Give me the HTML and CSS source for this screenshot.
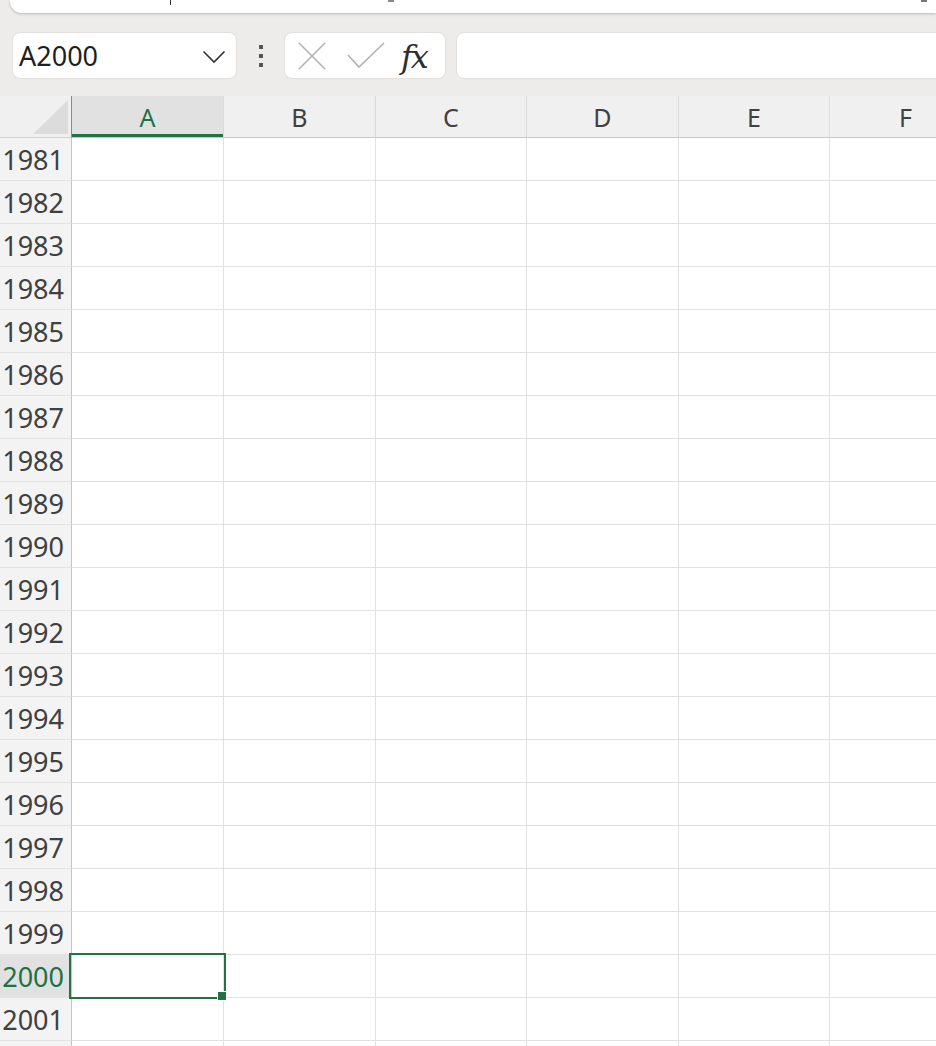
FILE: index.html
```html
<!DOCTYPE html>
<html lang="en">
<head>
  <meta charset="UTF-8" />
  <title>Sheet</title>
  <link rel="stylesheet" href="styles.css">
</head>
<body>
  <div class="titlebar">
    <span class="frag frag1"></span>
    <span class="frag frag2"></span>
    <span class="frag frag3"></span>
  </div>

  <div class="formula-row">
    <div class="namebox">
      <span class="cell-ref">A2000</span>
      <svg class="chevron" width="24" height="14" viewBox="0 0 24 14">
        <polyline points="1.5,1.5 12,12 22.5,1.5" fill="none" stroke="#333" stroke-width="1.6" />
      </svg>
    </div>
    <div class="grip"><i></i><i></i><i></i></div>
    <div class="fx-buttons">
      <svg width="30" height="30" viewBox="0 0 30 30" class="btn-cancel">
        <path d="M2 2 L28 28 M28 2 L2 28" stroke="#b3b3b3" stroke-width="1.6" fill="none" />
      </svg>
      <svg width="38" height="28" viewBox="0 0 38 28" class="btn-enter">
        <polyline points="1,13 12,25 37,1" stroke="#b3b3b3" stroke-width="1.6" fill="none" />
      </svg>
      <span class="fx">fx</span>
    </div>
    <div class="formula-input"></div>
  </div>

  <div class="sheet">
    <div class="corner"><span class="corner-tri"></span></div>
    <div class="col-head selected">A</div>
    <div class="col-head">B</div>
    <div class="col-head">C</div>
    <div class="col-head">D</div>
    <div class="col-head">E</div>
    <div class="col-head">F</div>
  </div>

<script>
  // build rows 1981 - 2001, plus one empty strip that the window cuts
  const sheet = document.querySelector('.sheet')
  for (let r = 1981; r <= 2002; r++) {
    const head = document.createElement('div')
    head.className = 'row-head' + (r === 2000 ? ' selected' : '')
    if (r < 2002) head.textContent = r
    sheet.appendChild(head)
    for (let c = 0; c < 6; c++) {
      const cell = document.createElement('div')
      cell.className = 'cell' + (r === 2000 && c === 0 ? ' active' : '')
      sheet.appendChild(cell)
    }
  }
</script>
</body>
</html>
```

FILE: styles.css
```css
html, body {
  margin: 0;
  height: 100%;
  overflow: hidden;
}
body {
  background: #eeecea;
  font-family: "Noto Sans", "Open Sans", sans-serif;
  color: #262626;
}
.titlebar {
  position: relative;
  height: 13px;
  margin-left: 10px;
  background: #fff;
  border-bottom-left-radius: 12px;
  box-shadow: 0 1px 3px rgba(0, 0, 0, 0.22);
}
.frag {
  position: absolute;
  top: 0;
  background: #333;
}
.frag1 { left: 160px; width: 1px; height: 5px; }
.frag2 { left: 378px; width: 6px; height: 2px; background: #888; }
.frag3 { left: 911px; width: 6px; height: 2px; background: #777; }

.formula-row {
  display: flex;
  align-items: stretch;
  height: 47px;
  margin-top: 19px;
  padding-left: 12px;
}
.namebox {
  width: 225px;
  box-sizing: border-box;
  display: flex;
  align-items: center;
  justify-content: space-between;
  background: #fff;
  border: 1px solid #e2dfdc;
  border-radius: 8px;
  padding: 0 10px 0 6px;
}
.cell-ref {
  font-size: 27px;
  color: #1f1f1f;
}
.chevron {
  margin-top: 2px;
}
.grip {
  width: 47px;
  display: flex;
  flex-direction: column;
  align-items: center;
  justify-content: center;
  gap: 5px;
}
.grip i {
  display: block;
  width: 4px;
  height: 4px;
  background: #555;
}
.fx-buttons {
  width: 162px;
  box-sizing: border-box;
  display: flex;
  align-items: center;
  gap: 20px;
  background: #fff;
  border: 1px solid #e2dfdc;
  border-radius: 8px;
  padding: 0 10px 0 12px;
}
.fx {
  font-family: "DejaVu Serif", "Liberation Serif", serif;
  font-style: italic;
  font-size: 32px;
  letter-spacing: -2px;
  color: #2e2e2e;
  margin-left: -4px;
  margin-top: 2px;
}
.formula-input {
  flex: 1;
  margin-left: 10px;
  margin-right: -12px;
  background: #fff;
  border: 1px solid #e2dfdc;
  border-radius: 8px;
}

.sheet {
  display: grid;
  grid-template-columns: 72px 152px 152px 151px 152px 151px 152px;
  grid-template-rows: 42px;
  grid-auto-rows: 43px;
  margin-top: 17px;
  background: #fff;
}
.sheet > div {
  box-sizing: border-box;
}
.corner {
  position: relative;
  background: #f0f0f0;
  border-right: 1px solid #8a8a8a;
  border-bottom: 1px solid #d0d0d0;
}
.corner-tri {
  position: absolute;
  left: 33px;
  top: 4px;
  width: 35px;
  height: 34px;
  background: #dcdcdc;
  clip-path: polygon(100% 0, 100% 100%, 0 100%);
}
.col-head {
  display: flex;
  align-items: center;
  justify-content: center;
  background: #f0f0f0;
  border-right: 1px solid #dadada;
  border-bottom: 1px solid #c8c8c8;
  font-size: 25px;
  color: #404040;
  padding-top: 1px;
}
.col-head.selected {
  background: #e1e1e1;
  color: #1e7145;
  box-shadow: inset 0 -3px 0 #217346;
}
.row-head {
  display: flex;
  align-items: center;
  justify-content: flex-end;
  padding-right: 7px;
  background: #f3f3f3;
  border-right: 1px solid #c4c4c4;
  border-bottom: 1px solid #e3e3e3;
  font-size: 27px;
  color: #404040;
}
.row-head.selected {
  background: #e1e1e1;
  color: #1e7145;
}
.cell {
  border-right: 1px solid #e1e1e1;
  border-bottom: 1px solid #e1e1e1;
}
.cell.active {
  position: relative;
}
.cell.active::before {
  content: "";
  position: absolute;
  left: -3px;
  top: -2px;
  width: 157px;
  height: 46px;
  box-sizing: border-box;
  border: 2px solid #217346;
}
.cell.active::after {
  content: "";
  position: absolute;
  left: 146px;
  top: 37px;
  width: 8px;
  height: 8px;
  background: #217346;
  box-shadow: 0 0 0 1px #fff;
}
```
